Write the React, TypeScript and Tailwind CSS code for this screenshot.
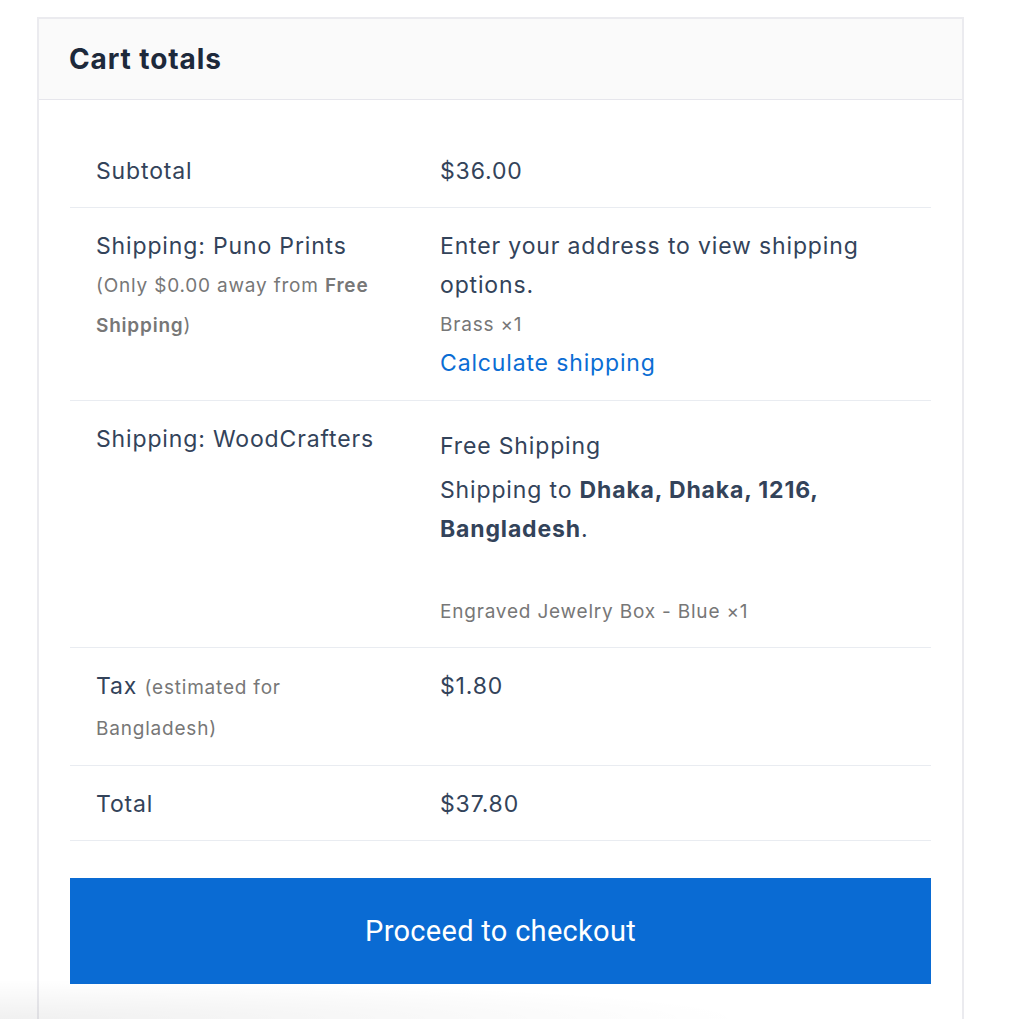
import React from "react";

const font = { fontFamily: "Inter, 'Noto Sans', 'Liberation Sans', sans-serif" };

function Row({ left, right }: { left: React.ReactNode; right: React.ReactNode }) {
  return (
    <div className="grid grid-cols-[344px_1fr] border-b border-[#e9ecf1]">
      <div className="pl-[26px] pr-[26px] pt-[19px] pb-[16px]">{left}</div>
      <div className="pl-[26px] pr-[26px] pt-[19px] pb-[16px]">{right}</div>
    </div>
  );
}

const small = "text-[19px] tracking-[0.8px] text-[#777777]";

export default function App() {
  return (
    <div className="relative w-[1024px] h-[1019px] overflow-hidden bg-white" style={font}>
      <div className="pt-[17px] pl-[37px]">
        <div className="w-[927px] border-2 border-[#ebebef] bg-white h-[1020px]">
          <div className="h-[81px] bg-[#fafafa] border-b border-[#e6e6ec] flex items-center pl-[30px]">
            <h2 className="text-[28px] font-bold text-[#1d293b] tracking-[0.9px]">Cart totals</h2>
          </div>
          <div className="px-[31px] pt-[33px] text-[23px] tracking-[0.85px] leading-[39px] text-[#33435a]">
            <Row left={<div>Subtotal</div>} right={<div>$36.00</div>} />
            <Row
              left={
                <div>
                  <div>Shipping: Puno Prints</div>
                  <div className={`${small} leading-[40px]`}>
                    (Only $0.00 away from <span className="font-semibold">Free</span>
                    <br />
                    <span className="font-semibold">Shipping</span>)
                  </div>
                </div>
              }
              right={
                <div className="pb-[1px]">
                  <div>
                    Enter your address to view shipping
                    <br />
                    options.
                  </div>
                  <div className={`${small} leading-[39px]`}>Brass ×1</div>
                  <div className="text-[#0b6dd4]">Calculate shipping</div>
                </div>
              }
            />
            <Row
              left={<div>Shipping: WoodCrafters</div>}
              right={
                <div>
                  <div className="pt-[7px] leading-[39px]">Free Shipping</div>
                  <div className="mt-[5px]">
                    Shipping to <span className="font-bold">Dhaka, Dhaka, 1216,</span>
                    <br />
                    <span className="font-bold">Bangladesh</span>.
                  </div>
                  <div className={`mt-[43px] leading-[39px] ${small}`}>Engraved Jewelry Box - Blue ×1</div>
                </div>
              }
            />
            <Row
              left={
                <div>
                  <div>
                    Tax <span className={small}>(estimated for</span>
                  </div>
                  <div className={`mt-[2px] leading-[40px] ${small}`}>Bangladesh)</div>
                </div>
              }
              right={<div>$1.80</div>}
            />
            <Row left={<div>Total</div>} right={<div>$37.80</div>} />
            <div className="mt-[37px] h-[106px] bg-[#0a6bd3] flex items-center justify-center">
              <span
                className="text-white text-[29px] tracking-[0.3px]"
                style={{ fontFamily: "Roboto, 'Liberation Sans', sans-serif" }}
              >
                Proceed to checkout
              </span>
            </div>
          </div>
        </div>
      </div>
      <div className="pointer-events-none absolute left-0 bottom-0 w-[760px] h-[40px] bg-[radial-gradient(ellipse_at_bottom_left,rgba(0,0,0,0.06),rgba(0,0,0,0)_70%)]" />
    </div>
  );
}
